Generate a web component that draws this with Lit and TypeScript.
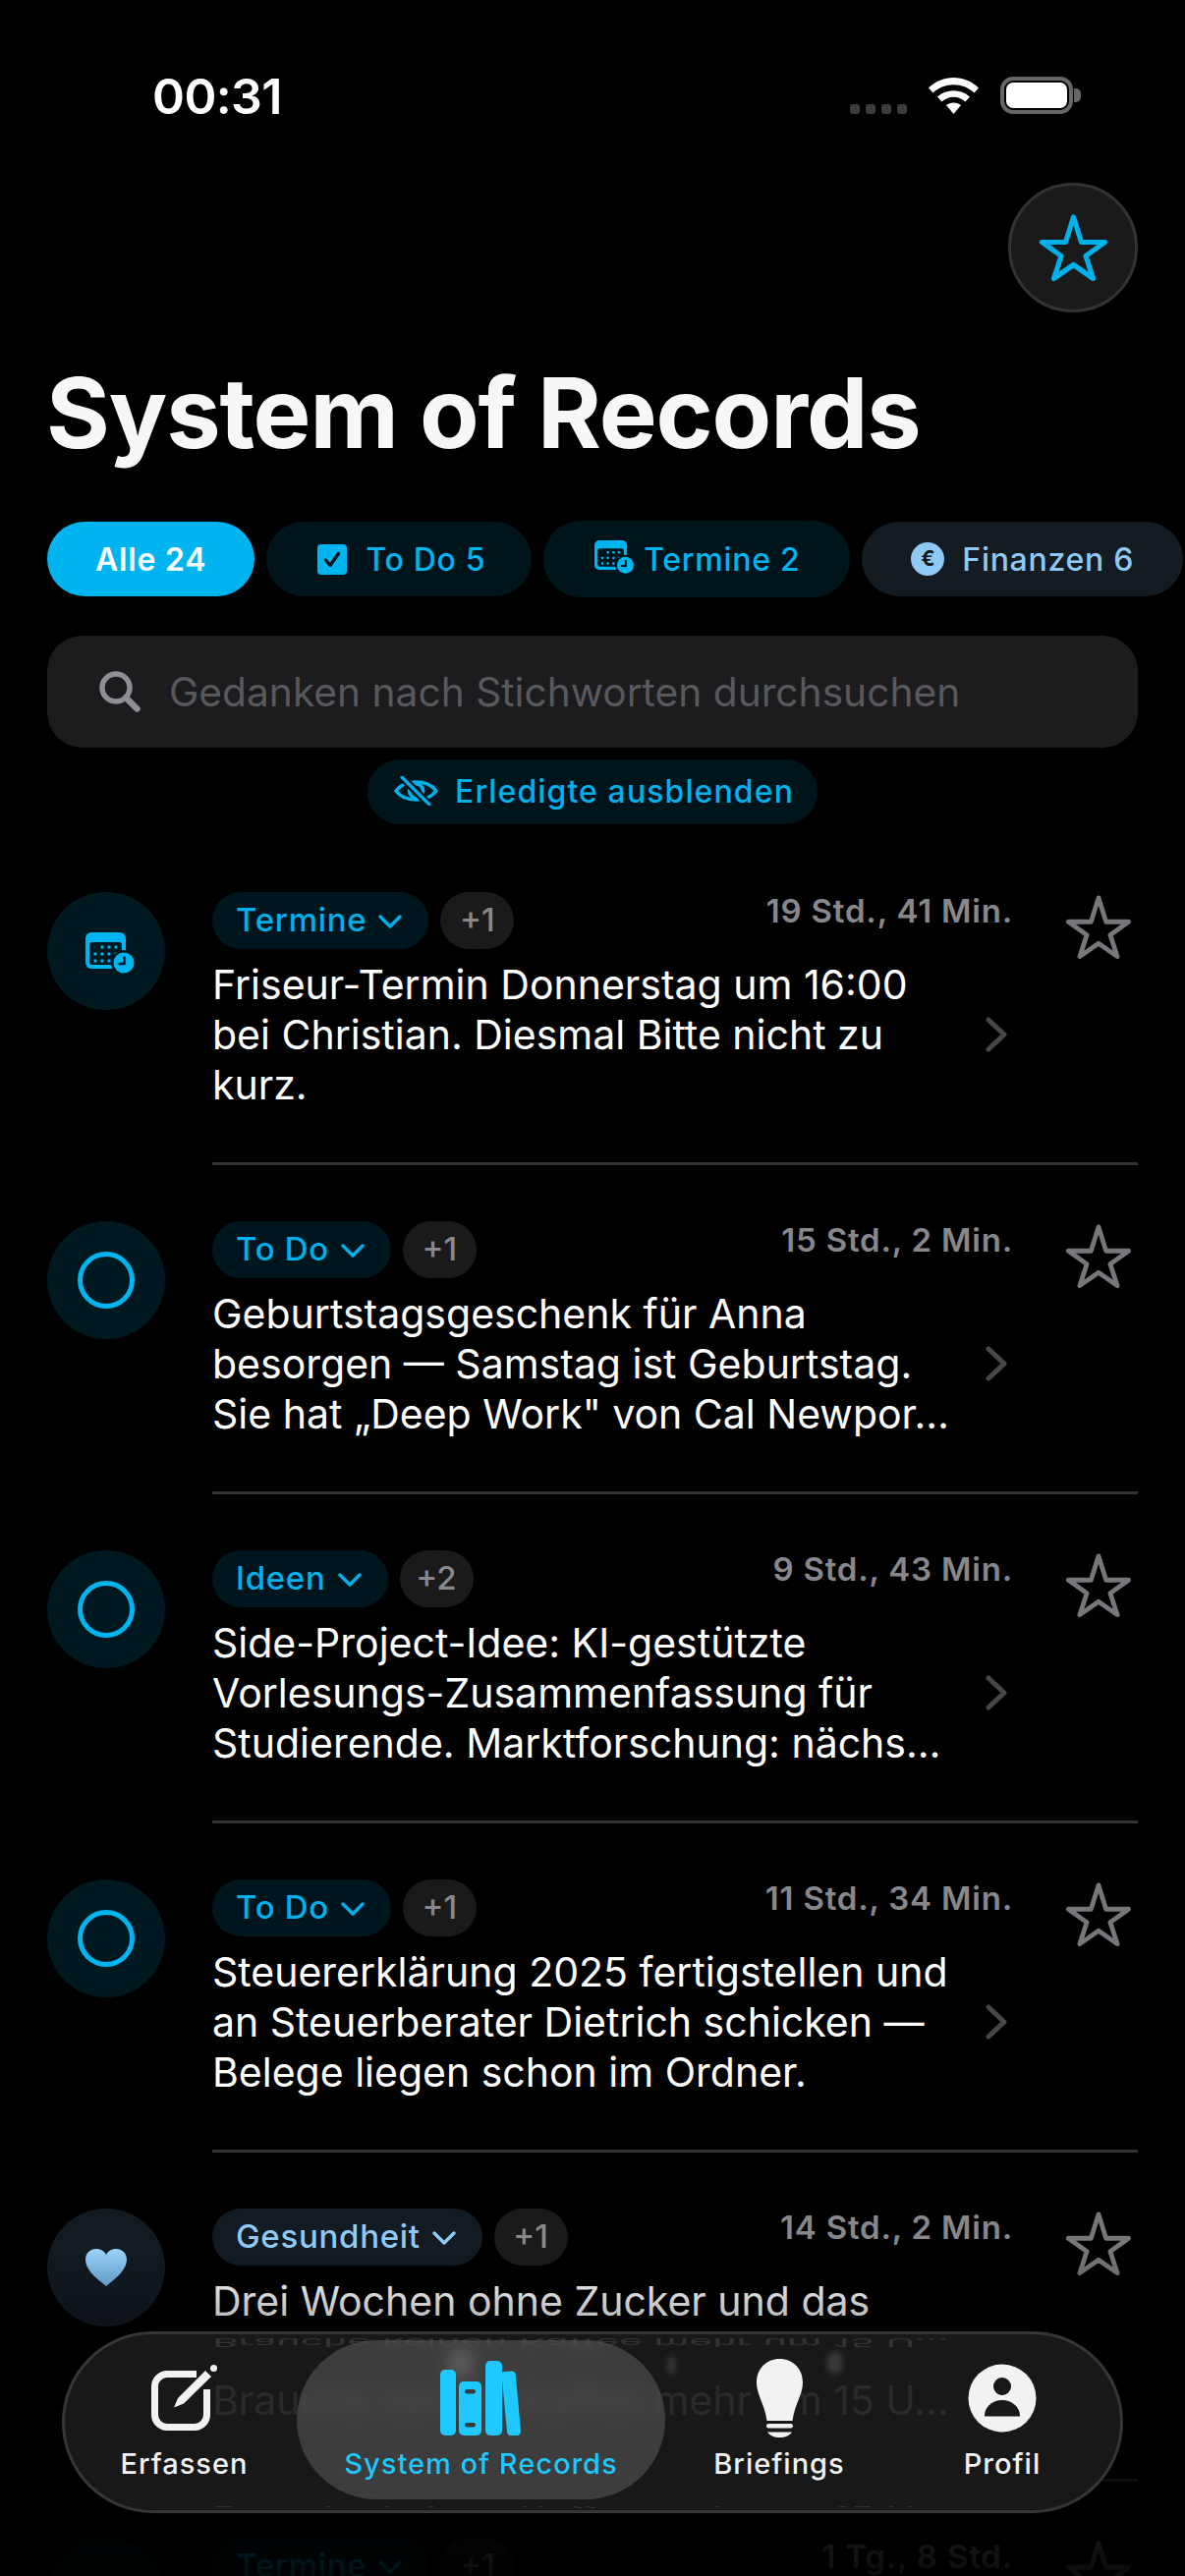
import { LitElement, html, css, svg } from "lit";
import { customElement } from "lit/decorators.js";

const STAR = "M35.5 3 L43.5 28.5 H67.5 L48 42.5 L55.5 65.5 L35.5 51.5 L15.5 65.5 L23 42.5 L3.5 28.5 H27.5 Z";

const calendar = (w: number, h: number, hole: string) => html`<svg width=${w} height=${h} viewBox="0 0 52 48">
  <rect x="0" y="0" width="41" height="37" rx="6" fill="#00b4f0"></rect>
  <rect x="4" y="10" width="33" height="23" rx="3" fill=${hole}></rect>
  ${[[17,15],[24,15],[31,15],[10,22],[17,22],[24,22],[31,22],[10,29],[17,29],[24,29]].map(([x,y]) => svg`<rect x=${x-1.5} y=${y-1.5} width="3" height="3" rx=".6" fill="#00b4f0"></rect>`)}
  <circle cx="39" cy="31" r="13" fill=${hole}></circle>
  <circle cx="39" cy="31" r="10.5" fill="#00b4f0"></circle>
  <path d="M39.5 24.5 V32 H33.5" fill="none" stroke=${hole} stroke-width="2.4"></path>
</svg>`;

const chevron = html`<svg class="tagchev" width="24" height="14" viewBox="0 0 24 14"><path d="M2 2 L12 12 L22 2" fill="none" stroke="currentColor" stroke-width="3.4" stroke-linecap="round" stroke-linejoin="round"></path></svg>`;

type Row = { icon: string; tag: string; more: string; time: string; lines: string[]; health?: boolean };
const rows: Row[] = [
  { icon: "cal", tag: "Termine", more: "+1", time: "19 Std., 41 Min.", lines: ["Friseur-Termin Donnerstag um 16:00", "bei Christian. Diesmal Bitte nicht zu", "kurz."] },
  { icon: "ring", tag: "To Do", more: "+1", time: "15 Std., 2 Min.", lines: ["Geburtstagsgeschenk für Anna", "besorgen — Samstag ist Geburtstag.", "Sie hat „Deep Work\" von Cal Newpor…"] },
  { icon: "ring", tag: "Ideen", more: "+2", time: "9 Std., 43 Min.", lines: ["Side-Project-Idee: KI-gestützte", "Vorlesungs-Zusammenfassung für", "Studierende. Marktforschung: nächs…"] },
  { icon: "ring", tag: "To Do", more: "+1", time: "11 Std., 34 Min.", lines: ["Steuererklärung 2025 fertigstellen und", "an Steuerberater Dietrich schicken —", "Belege liegen schon im Ordner."] },
  { icon: "heart", tag: "Gesundheit", more: "+1", time: "14 Std., 2 Min.", lines: ["Drei Wochen ohne Zucker und das"], health: true },
  { icon: "cal", tag: "Termine", more: "+1", time: "1 Tg., 8 Std.", lines: [] },
];

@customElement("app-root")
export class AppRoot extends LitElement {
  static styles = css`
    :host { display: block; position: relative; width: 1206px; height: 2622px; overflow: hidden; background: #000; color: #fff; font-family: Inter, "Liberation Sans", sans-serif; }
    .status { height: 186px; display: flex; justify-content: space-between; box-sizing: border-box; padding: 68px 106px 0 155px; }
    .clock { font-size: 50px; line-height: 60px; font-weight: 600; letter-spacing: -.6px; color: #fff; }
    .sysicons { display: flex; align-items: flex-start; padding-top: 10px; }
    .dots { display: flex; gap: 6px; margin: 28px 22px 0 0; }
    .dots i { width: 10px; height: 10px; border-radius: 3px; background: #3c3c3c; }
    .wifi { margin: 1px 22px 0 0; }
    .battery { width: 74px; height: 38px; box-sizing: border-box; border: 4px solid #666; border-radius: 13px; padding: 2px; }
    .battery b { display: block; height: 100%; background: #fff; border-radius: 7px; }
    .nub { width: 7px; height: 14px; margin: 12px 0 0 1px; background: #666; border-radius: 0 5px 5px 0; }

    .topbtn { display: flex; justify-content: flex-end; padding-right: 48px; }
    .fav { width: 132px; height: 132px; box-sizing: border-box; border-radius: 50%; background: #1a1a1a; border: 3px solid #333; display: flex; align-items: center; justify-content: center; }
    h1 { margin: 42px 0 0 47px; font-size: 99px; line-height: 120px; font-weight: 700; letter-spacing: -1.15px; color: #f7f7f7; white-space: nowrap; }

    .chips { display: flex; gap: 12px; margin: 51px 0 0 48px; }
    .chip { flex: none; height: 76px; box-sizing: border-box; border-radius: 38px; display: flex; align-items: center; font-size: 32px; font-weight: 500; letter-spacing: .7px; color: #00b4f0; background: #00141c; white-space: nowrap; }
    .chip.all { background: #00b4f0; color: #fff; font-weight: 600; padding: 0 49px; letter-spacing: .8px; }
    .chip.todo { padding: 0 47px 0 52px; gap: 19px; }
    .chip.term { padding: 0 51px 0 52px; gap: 8px; height: 78px; margin-top: -1px; }
    .chip.fin { padding: 0 50px 0 50px; gap: 18px; color: #8fcaf5; background: #141b21; }
    .euro { width: 34px; height: 34px; border-radius: 50%; background: #8fcaf5; color: #10181e; font-size: 21px; font-weight: 700; line-height: 34px; text-align: center; letter-spacing: 0; }

    .search { margin: 39px 48px 0; height: 114px; border-radius: 36px; background: #1c1c1e; display: flex; align-items: center; padding-left: 53px; gap: 29px; font-size: 40.7px; color: #59595d; white-space: nowrap; }
    .hiderow { display: flex; justify-content: center; margin: 12px 0 0 0; }
    .hide { height: 66px; box-sizing: border-box; padding: 0 24px 2px 27px; border-radius: 33px; background: #00141c; color: #00b0ea; display: flex; align-items: center; gap: 17px; font-size: 32px; font-weight: 500; letter-spacing: 1.1px; white-space: nowrap; }

    .list { margin-top: 69px; padding: 0 48px; }
    .row { display: flex; height: 335px; }
    .badge { flex: none; width: 120px; height: 120px; margin-right: 48px; border-radius: 50%; background: #001820; display: flex; align-items: center; justify-content: center; }
    .badge.health { background: #121a22; }
    .ring { width: 58px; height: 58px; box-sizing: border-box; border-radius: 50%; border: 5px solid #00b4f0; }
    .right { flex: 1; min-width: 0; height: 278px; box-sizing: border-box; border-bottom: 3px solid #333; display: flex; }
    .main { width: 815px; flex: none; }
    .head { display: flex; align-items: flex-start; height: 58px; }
    .tag { height: 58px; box-sizing: border-box; padding: 0 27px 3px 24px; border-radius: 29px; background: #00161f; color: #00b0ea; display: flex; align-items: center; gap: 12px; font-size: 33px; font-weight: 500; letter-spacing: .7px; white-space: nowrap; }
    .tag .tagchev { margin-top: 4px; }
    .tag.health { background: #121a22; color: #8fcaf5; }
    .more { margin-left: 12px; height: 58px; box-sizing: border-box; padding-bottom: 2px; width: 75px; border-radius: 29px; background: #1a1a1a; color: #88888c; display: flex; align-items: center; justify-content: center; font-size: 33px; font-weight: 500; }
    .time { margin-left: auto; margin-top: 0; font-size: 33px; line-height: 38px; font-weight: 600; color: #88888c; letter-spacing: .8px; white-space: nowrap; }
    .body { display: flex; align-items: center; justify-content: space-between; margin-top: 11px; }
    .text { font-size: 41px; line-height: 51px; color: #fff; white-space: nowrap; }
    .chev { margin: 0 6px 2px 0; flex: none; }
    .rowstar { margin: 3px 0 0 53px; flex: none; }

    .fade { position: absolute; left: 0; right: 0; bottom: 0; height: 330px; background: linear-gradient(to bottom, rgba(0,0,0,0) 0%, rgba(0,0,0,.25) 20%, rgba(0,0,0,.7) 65%, rgba(0,0,0,.91) 100%); }

    .nav { position: absolute; left: 63px; top: 2373px; width: 1080px; height: 185px; box-sizing: border-box; border: 3px solid #363636; border-radius: 93px; background: #181818; overflow: hidden; padding: 6px 0 0 7px; display: grid; grid-template-columns: 229px 375px 232px 222px; }
    .ghost { position: absolute; left: 150px; top: 42px; font-size: 41px; line-height: 51px; color: #2a2a2a; white-space: nowrap; }
    .mirror { position: absolute; left: 150px; top: 0; height: 16px; width: 800px; overflow: hidden; }
    .mirror span { display: block; font-size: 41px; line-height: 51px; color: #333; white-space: nowrap; transform-origin: 0 0; transform: translateY(16px) scaleY(-.3); }
    .mirror.low { top: auto; bottom: 0; height: 4px; }
    .mirror.low span { transform: translateY(4px) scaleY(-.3); }
    .blob { position: absolute; background: #3a3a3a; border-radius: 6px; filter: blur(3px); }
    .blob.a { left: 614px; top: 22px; width: 7px; height: 18px; }
    .blob.b { left: 776px; top: 18px; width: 15px; height: 22px; }
    .blob.c { left: 394px; top: 18px; width: 18px; height: 24px; background: #555; }
    .item { position: relative; height: 162px; box-sizing: border-box; padding-top: 19px; display: flex; flex-direction: column; align-items: center; border-radius: 81px; color: #f2f2f2; }
    .item.on { background: rgba(255,255,255,.16); backdrop-filter: blur(9px); color: #1fc8ff; }
    .ico { height: 80px; display: flex; align-items: center; justify-content: center; }
    .label { margin-top: 10px; font-size: 29px; line-height: 34px; font-weight: 500; letter-spacing: 1px; white-space: nowrap; }
  `;

  private renderBadge(r: Row) {
    if (r.icon === "cal") return html`<span style="margin:10px -10px 0 0;display:flex">${calendar(52, 48, "#001820")}</span>`;
    if (r.icon === "ring") return html`<div class="ring"></div>`;
    return html`<svg width="42" height="38" viewBox="0 0 42 38"><defs><linearGradient id="hg" x1="0" y1="0" x2="0" y2="1"><stop offset="0" stop-color="#9ad2f8"></stop><stop offset="1" stop-color="#6fb2e4"></stop></linearGradient></defs><path fill="url(#hg)" d="M21 38 C8 28 0 20 0 11 C0 4 5 0 11 0 C15 0 19 2 21 6 C23 2 27 0 31 0 C37 0 42 4 42 11 C42 20 34 28 21 38Z"></path></svg>`;
  }

  private renderRow(r: Row) {
    return html`<div class="row">
      <div class="badge ${r.health ? "health" : ""}">${this.renderBadge(r)}</div>
      <div class="right">
        <div class="main">
          <div class="head">
            <div class="tag ${r.health ? "health" : ""}">${r.tag}${chevron}</div>
            <div class="more">${r.more}</div>
            <div class="time">${r.time}</div>
          </div>
          ${r.lines.length ? html`<div class="body">
            <div class="text">${r.lines.map((l) => html`<div>${l}</div>`)}</div>
            ${r.lines.length > 1 ? html`<svg class="chev" width="22" height="36" viewBox="0 0 22 36"><path d="M3 3 L19 18 L3 33" fill="none" stroke="#47474a" stroke-width="5" stroke-linecap="round" stroke-linejoin="round"></path></svg>` : ""}
          </div>` : ""}
        </div>
        <svg class="rowstar" width="68" height="66" viewBox="0 0 71 69"><path d=${STAR} fill="none" stroke="#77777b" stroke-width="5" stroke-linejoin="round"></path></svg>
      </div>
    </div>`;
  }

  render() {
    return html`
      <div class="status">
        <div class="clock">00:31</div>
        <div class="sysicons">
          <div class="dots"><i></i><i></i><i></i><i></i></div>
          <svg class="wifi" width="51" height="37" viewBox="0 0 51 37">
            <path fill="#fff" d="M0 10.5 C14 -3.5 37 -3.5 51 10.5 L46.5 15.5 C35 4.5 16 4.5 4.5 15.5 Z"></path>
            <path fill="#fff" d="M9 19.5 C18 11 33 11 42 19.5 L37.5 24.5 C30.5 18 20.5 18 13.5 24.5 Z"></path>
            <path fill="#fff" d="M18 28 C22 24.5 29 24.5 33 28 L25.5 37 Z"></path>
          </svg>
          <div class="battery"><b></b></div>
          <div class="nub"></div>
        </div>
      </div>
      <div class="topbtn"><div class="fav"><svg width="71" height="69" viewBox="0 0 71 69"><path d=${STAR} fill="none" stroke="#00b0ea" stroke-width="5.2" stroke-linejoin="round"></path></svg></div></div>
      <h1>System of Records</h1>
      <div class="chips">
        <div class="chip all">Alle 24</div>
        <div class="chip todo">
          <svg width="30" height="31" viewBox="0 0 30 31"><rect width="30" height="31" rx="4" fill="#00b4f0"></rect><path d="M8.5 16 L13 21.5 L21.5 9.5" fill="none" stroke="#00141c" stroke-width="3.4" stroke-linecap="round" stroke-linejoin="round"></path></svg>
          To Do 5
        </div>
        <div class="chip term">${calendar(42, 39, "#00141c")}<span>Termine 2</span></div>
        <div class="chip fin"><div class="euro">€</div>Finanzen 6</div>
      </div>
      <div class="search">
        <svg width="42" height="42" viewBox="0 0 42 42"><circle cx="17" cy="17" r="14" fill="none" stroke="#8e8e93" stroke-width="5.5"></circle><path d="M27 27 L38.5 38.5" stroke="#8e8e93" stroke-width="6.5" stroke-linecap="round"></path></svg>
        <span>Gedanken nach Stichworten durchsuchen</span>
      </div>
      <div class="hiderow"><div class="hide">
        <svg width="45" height="30" viewBox="0 0 45 30">
          <path d="M2 15 C11 3 34 3 43 15 C34 27 11 27 2 15Z" fill="none" stroke="#00b0ea" stroke-width="3.6" stroke-linejoin="round"></path>
          <circle cx="22.5" cy="15" r="7" fill="none" stroke="#00b0ea" stroke-width="3.6"></circle>
          <path d="M8 1 L36 29" stroke="#00141c" stroke-width="8"></path>
          <path d="M8 1 L36 29" stroke="#00b0ea" stroke-width="3.2" stroke-linecap="round"></path>
        </svg>
        Erledigte ausblenden
      </div></div>
      <div class="list">${rows.map((r) => this.renderRow(r))}</div>
      <div class="fade"></div>
      <div class="nav">
        <div class="ghost" aria-hidden="true">Brauche keinen Kaffee mehr um 15 U…</div>
        <div class="mirror" aria-hidden="true"><span>Brauche keinen Kaffee mehr um 15 U…</span></div>
        <div class="mirror low" aria-hidden="true"><span>Brauche keinen Kaffee mehr um 15 U…</span></div>
        <div class="blob a"></div><div class="blob b"></div><div class="blob c"></div>
        <div class="item">
          <div class="ico"><svg width="68" height="68" viewBox="0 0 68 68">
            <path d="M56.5 25 V51 a12.5 12.5 0 0 1 -12.5 12.5 H16 a12.5 12.5 0 0 1 -12.5 -12.5 V22 a12.5 12.5 0 0 1 12.5 -12.5 H46" fill="none" stroke="#f2f2f2" stroke-width="7"></path>
            <path d="M23 43.5 L27 34 L55 6 L61 12 L33 39.5 Z" fill="#f2f2f2"></path>
            <circle cx="63.5" cy="3.5" r="3.5" fill="#f2f2f2"></circle>
          </svg></div>
          <div class="label">Erfassen</div>
        </div>
        <div class="item on">
          <div class="ico"><svg width="83" height="76" viewBox="0 0 83 76">
            <rect x="0" y="9" width="16" height="67" rx="5" fill="#1fc8ff"></rect>
            <rect x="19" y="21" width="23" height="55" rx="5" fill="#1fc8ff"></rect>
            <rect x="25" y="29" width="11" height="4.5" rx="2.2" fill="#3a3a3a"></rect>
            <rect x="25" y="63" width="11" height="4.5" rx="2.2" fill="#3a3a3a"></rect>
            <rect x="46" y="0" width="17" height="76" rx="5" fill="#1fc8ff"></rect>
            <path d="M65 11 L73 10.5 C75 10.5 76.5 12 76.7 14 L82 71 C82.2 74 80.5 76 78 76 L72 76 C69.5 76 68.3 74.5 68 72 L62.5 14 C62.3 12.5 63.5 11 65 11Z" fill="#1fc8ff"></path>
          </svg></div>
          <div class="label">System of Records</div>
        </div>
        <div class="item">
          <div class="ico"><svg width="47" height="80" viewBox="0 0 47 80">
            <path fill="#f2f2f2" d="M23.5 0 C37 0 47 10 47 24 C47 37 39 45 36.5 63 H10.5 C8 45 0 37 0 24 C0 10 10 0 23.5 0 Z"></path>
            <rect x="10" y="66" width="27" height="4.5" rx="2.2" fill="#f2f2f2"></rect>
            <path fill="#f2f2f2" d="M11 74.5 H36 C34 78 29 80 23.5 80 C18 80 13 78 11 74.5 Z"></path>
          </svg></div>
          <div class="label">Briefings</div>
        </div>
        <div class="item">
          <div class="ico"><svg width="70" height="70" viewBox="0 0 70 70">
            <circle cx="35" cy="35" r="34.5" fill="#f2f2f2"></circle>
            <circle cx="35" cy="23" r="9" fill="#181818"></circle>
            <path fill="#181818" d="M17 53 C17 44 25 37 35 37 C45 37 53 44 53 53 C53 53.5 52.7 53.5 52 53.5 H18 C17.3 53.5 17 53.5 17 53 Z"></path>
          </svg></div>
          <div class="label">Profil</div>
        </div>
      </div>
    `;
  }
}
